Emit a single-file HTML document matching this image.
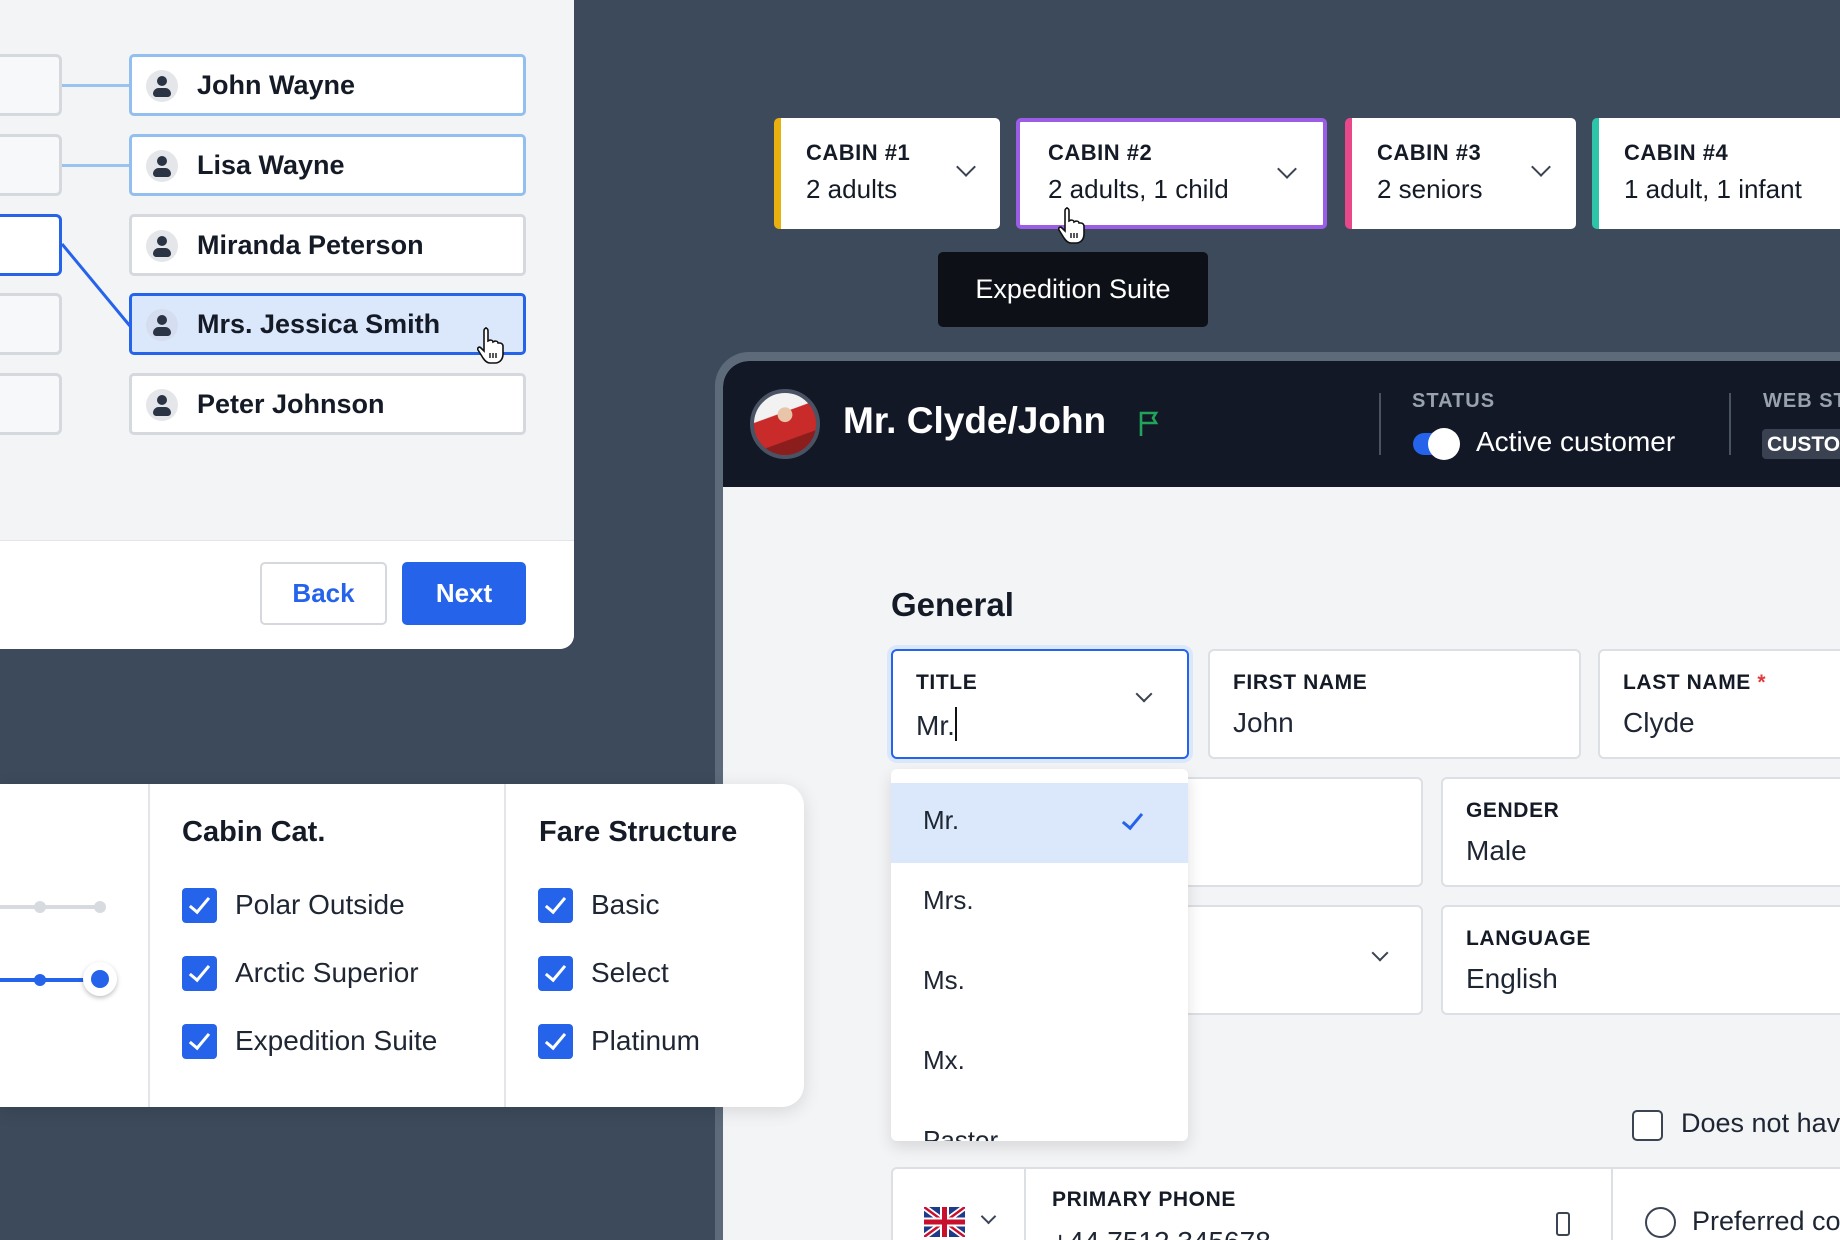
<!DOCTYPE html>
<html style="overflow:hidden;width:1840px;height:1240px"><head><meta charset="utf-8"><style>
*{box-sizing:border-box;margin:0;padding:0}
body{width:1840px;height:1240px;overflow:hidden;background:#3c4a5b;font-family:"Liberation Sans",sans-serif;color:#151b26;position:relative}
.a{position:absolute}
.stub{position:absolute;left:-10px;width:72px;height:62px;border:3px solid #d5d8dd;border-radius:6px;background:#f7f8fa}
.card{position:absolute;left:129px;width:397px;height:62px;border:3px solid #d5d8dd;border-radius:5px;background:#fff;font-size:27px;font-weight:bold;display:flex;align-items:center;padding-left:65px}
.card .av{position:absolute;left:14px;top:13px;width:32px;height:32px;border-radius:50%;background:#e4e6ea}
.card .av:before{content:"";position:absolute;left:11px;top:6px;width:10px;height:10px;border-radius:50%;background:#2b3444}
.card .av:after{content:"";position:absolute;left:7px;top:18px;width:18px;height:9px;border-radius:9px 9px 5px 5px;background:#2b3444}
.cab{position:absolute;top:118px;height:111px;background:#fff;border-radius:5px;padding:22px 0 0 32px;overflow:hidden}
.cab b{display:block;font-size:22px;letter-spacing:.5px}
.cab span{display:block;font-size:26px;margin-top:8px}
.chev{position:absolute;width:14px;height:14px;border-right:2.5px solid #3b4452;border-bottom:2.5px solid #3b4452;transform:rotate(45deg)}
.fld{position:absolute;background:#fff;border:2px solid #dcdfe3;border-radius:6px;padding:20px 0 0 23px}
.fld b{display:block;font-size:21px;letter-spacing:.6px}
.fld span{display:block;font-size:28px;margin-top:12px;color:#1f2633}
.dd div{height:80px;font-size:26px;padding:22px 0 0 32px;color:#1f2633}
.cb{position:absolute;width:35px;height:35px;background:#2563eb;border-radius:4px}
.cb:after{content:"";position:absolute;left:12px;top:5px;width:8px;height:17px;border-right:3.5px solid #fff;border-bottom:3.5px solid #fff;transform:rotate(40deg)}
.lbl{position:absolute;font-size:28px;color:#1f2633}
</style></head><body>

<div class="a" style="left:0;top:0;width:574px;height:649px;background:#f3f4f6;border-radius:0 0 14px 0;overflow:hidden">
  <div class="stub" style="top:54px"></div>
  <div class="stub" style="top:134px"></div>
  <div class="stub" style="top:214px;border-color:#2563eb;background:#fff"></div>
  <div class="stub" style="top:293px"></div>
  <div class="stub" style="top:373px"></div>
  <div class="a" style="left:62px;top:84px;width:67px;height:3px;background:#9cc2ee"></div>
  <div class="a" style="left:62px;top:164px;width:67px;height:3px;background:#9cc2ee"></div>
  <svg class="a" style="left:60px;top:240px" width="72" height="90"><line x1="2" y1="4" x2="70" y2="86" stroke="#2563eb" stroke-width="3"/></svg>
  <div class="card" style="top:54px;border-color:#93bff0"><div class="av"></div>John Wayne</div>
  <div class="card" style="top:134px;border-color:#93bff0"><div class="av"></div>Lisa Wayne</div>
  <div class="card" style="top:214px"><div class="av"></div>Miranda Peterson</div>
  <div class="card" style="top:293px;border-color:#2563eb;background:#dbe8fb"><div class="av" style="background:#d4def0"></div>Mrs. Jessica Smith</div>
  <div class="card" style="top:373px"><div class="av"></div>Peter Johnson</div>
  <div class="a" style="left:0;top:540px;width:574px;height:109px;background:#fff;border-top:1px solid #e3e5e8"></div>
  <div class="a" style="left:260px;top:562px;width:127px;height:63px;border:2px solid #d5d8dd;border-radius:5px;background:#fff;color:#2563eb;font-size:26px;font-weight:bold;text-align:center;line-height:59px">Back</div>
  <div class="a" style="left:402px;top:562px;width:124px;height:63px;border-radius:5px;background:#2563eb;color:#fff;font-size:26px;font-weight:bold;text-align:center;line-height:63px">Next</div>
</div>
<svg class="a" style="left:477px;top:326px" width="30" height="40" viewBox="0 0 30 40"><path d="M8 2c2 0 3 1 3 3v10l2-1c2 0 3 1 3 2l2-1c2 0 3 1 3 2l2 0c2 0 3 2 3 3v8c0 5-3 9-8 9h-5c-3 0-5-2-7-5l-5-8c-1-2 1-4 3-2l3 3V5c0-2 1-3 3-3z" fill="#fff" stroke="#111" stroke-width="1.6"/><path d="M13 27v5M16 27v5M19 27v5" stroke="#111" stroke-width="1.4"/></svg>

<div class="cab" style="left:774px;width:226px;border-left:7px solid #e8b10f;padding-left:25px"><b>CABIN #1</b><span>2 adults</span><div class="chev" style="left:178px;top:42px"></div></div>
<div class="cab" style="left:1016px;width:311px;border:4px solid #9b5de5;padding:18px 0 0 28px"><b>CABIN #2</b><span>2 adults, 1 child</span><div class="chev" style="left:260px;top:40px"></div></div>
<div class="cab" style="left:1345px;width:231px;border-left:7px solid #e8488a;padding-left:25px"><b>CABIN #3</b><span>2 seniors</span><div class="chev" style="left:182px;top:42px"></div></div>
<div class="cab" style="left:1592px;width:248px;border-left:7px solid #2ec4a9;padding-left:25px;border-radius:5px 0 0 5px"><b>CABIN #4</b><span style="white-space:nowrap">1 adult, 1 infant</span></div>
<svg class="a" style="left:1058px;top:206px" width="30" height="40" viewBox="0 0 30 40"><path d="M8 2c2 0 3 1 3 3v10l2-1c2 0 3 1 3 2l2-1c2 0 3 1 3 2l2 0c2 0 3 2 3 3v8c0 5-3 9-8 9h-5c-3 0-5-2-7-5l-5-8c-1-2 1-4 3-2l3 3V5c0-2 1-3 3-3z" fill="#fff" stroke="#111" stroke-width="1.6"/><path d="M13 27v5M16 27v5M19 27v5" stroke="#111" stroke-width="1.4"/></svg>
<div class="a" style="left:938px;top:252px;width:270px;height:75px;background:#0d1117;border-radius:5px;color:#fff;font-size:27px;text-align:center;line-height:75px">Expedition Suite</div>

<div class="a" style="left:715px;top:352px;width:1125px;height:888px;background:#5d6a79;border-radius:34px 0 0 0"></div>
<div class="a" style="left:723px;top:361px;width:1117px;height:879px;background:#f3f4f6;border-radius:26px 0 0 0;overflow:hidden">
  <div class="a" style="left:0;top:0;width:1117px;height:126px;background:#131827"></div>
</div>
<div class="a" style="left:750px;top:389px;width:70px;height:70px;border-radius:50%;background:radial-gradient(circle at 50% 35%,#e8c4a8 0 14%,transparent 15%),linear-gradient(160deg,#f2f2f2 0 35%,#c92a2a 36% 70%,#8c1d1d 71%);border:4px solid #4a5363"></div>
<div class="a" style="left:843px;top:400px;font-size:37px;font-weight:bold;color:#fff">Mr. Clyde/John</div>
<svg class="a" style="left:1138px;top:410px" width="22" height="28"><path d="M3 26V3h15l-3 5 3 5H3" fill="none" stroke="#22a35a" stroke-width="2.6"/></svg>
<div class="a" style="left:1379px;top:393px;width:2px;height:62px;background:#4a5261"></div>
<div class="a" style="left:1412px;top:390px;font-size:20px;font-weight:bold;color:#98a1ae;letter-spacing:1px">STATUS</div>
<div class="a" style="left:1413px;top:433px;width:46px;height:22px;border-radius:11px;background:#2563eb"></div>
<div class="a" style="left:1428px;top:428px;width:32px;height:32px;border-radius:50%;background:#fff"></div>
<div class="a" style="left:1476px;top:426px;font-size:28px;color:#fff">Active customer</div>
<div class="a" style="left:1729px;top:393px;width:2px;height:62px;background:#4a5261"></div>
<div class="a" style="left:1763px;top:390px;font-size:20px;font-weight:bold;color:#98a1ae;letter-spacing:1px;white-space:nowrap">WEB STATUS</div>
<div class="a" style="left:1762px;top:429px;width:78px;height:30px;background:#3a4150;border-radius:4px 0 0 4px;color:#fff;font-size:21px;font-weight:bold;padding:4px 0 0 5px;overflow:hidden;white-space:nowrap">CUSTOMER</div>

<div class="a" style="left:891px;top:586px;font-size:33px;font-weight:bold">General</div>
<div class="fld" style="left:891px;top:649px;width:298px;height:110px;border-color:#2563eb;box-shadow:0 0 0 4px #dbe8fb"><b>TITLE</b><span>Mr.<span style="display:inline-block;width:2px;height:34px;background:#111;vertical-align:-6px;margin:0"></span></span><div class="chev" style="left:245px;top:37px;width:12px;height:12px;border-width:2px"></div></div>
<div class="fld" style="left:1208px;top:649px;width:373px;height:110px"><b>FIRST NAME</b><span>John</span></div>
<div class="fld" style="left:1598px;top:649px;width:260px;height:110px"><b>LAST NAME <i style="color:#e23b3b;font-style:normal">*</i></b><span>Clyde</span></div>
<div class="fld" style="left:1150px;top:777px;width:273px;height:110px"></div>
<div class="fld" style="left:1441px;top:777px;width:420px;height:110px"><b>GENDER</b><span>Male</span></div>
<div class="fld" style="left:1150px;top:905px;width:273px;height:110px"><div class="chev" style="left:222px;top:40px;width:12px;height:12px;border-width:2px"></div></div>
<div class="fld" style="left:1441px;top:905px;width:420px;height:110px"><b>LANGUAGE</b><span>English</span></div>

<div class="a dd" style="left:891px;top:769px;width:297px;height:372px;background:#fff;border-radius:6px;overflow:hidden;box-shadow:0 6px 16px rgba(0,0,0,.12)">
  <div style="height:14px;padding:0"></div>
  <div style="background:#dbe8fb;position:relative">Mr.<span style="position:absolute;left:236px;top:26px;width:11px;height:20px;border-right:3px solid #2563eb;border-bottom:3px solid #2563eb;transform:rotate(40deg)"></span></div>
  <div>Mrs.</div><div>Ms.</div><div>Mx.</div><div>Pastor</div>
</div>

<div class="a" style="left:1632px;top:1110px;width:31px;height:31px;border:2.5px solid #3b4452;border-radius:5px;background:#fff"></div>
<div class="a" style="left:1681px;top:1108px;font-size:27px;color:#1f2633;white-space:nowrap">Does not have</div>

<div class="a" style="left:891px;top:1167px;width:949px;height:73px;background:#fff;border:2px solid #dcdfe3;border-bottom:none;border-right:none;border-radius:6px 0 0 0;overflow:hidden">
  <div class="a" style="left:131px;top:0;width:2px;height:80px;background:#dcdfe3"></div>
  <div class="a" style="left:718px;top:0;width:2px;height:80px;background:#dcdfe3"></div>
  <svg class="a" style="left:31px;top:38px" width="41" height="30"><rect width="41" height="30" fill="#1e3a8a"/><path d="M0 0L41 30M41 0L0 30" stroke="#fff" stroke-width="6"/><path d="M0 0L41 30M41 0L0 30" stroke="#c8102e" stroke-width="2.5"/><path d="M20.5 0v30M0 15h41" stroke="#fff" stroke-width="9"/><path d="M20.5 0v30M0 15h41" stroke="#c8102e" stroke-width="5"/></svg>
  <div class="chev" style="left:90px;top:42px;width:11px;height:11px;border-width:2px"></div>
  <div class="a" style="left:159px;top:19px;font-size:21px;font-weight:bold;letter-spacing:.6px;white-space:nowrap">PRIMARY PHONE</div>
  <div class="a" style="left:159px;top:57px;font-size:28px;color:#1f2633;white-space:nowrap">+44 7512 345678</div>
  <div class="a" style="left:663px;top:43px;width:14px;height:24px;border:2px solid #3b4452;border-radius:3px"></div>
  <div class="a" style="left:752px;top:38px;width:31px;height:31px;border:2.5px solid #3b4452;border-radius:50%"></div>
  <div class="a" style="left:799px;top:37px;font-size:27px;color:#1f2633;white-space:nowrap">Preferred contact</div>
</div>

<div class="a" style="left:0;top:784px;width:804px;height:323px;background:#fff;border-radius:0 22px 22px 0;box-shadow:0 4px 18px rgba(0,0,0,.12)">
  <div class="a" style="left:148px;top:0;width:2px;height:323px;background:#e3e5e8"></div>
  <div class="a" style="left:504px;top:0;width:2px;height:323px;background:#e3e5e8"></div>
  <div class="a" style="left:0;top:121px;width:100px;height:4px;background:#d7dadf"></div>
  <div class="a" style="left:34px;top:117px;width:12px;height:12px;border-radius:50%;background:#d7dadf"></div>
  <div class="a" style="left:94px;top:117px;width:12px;height:12px;border-radius:50%;background:#d7dadf"></div>
  <div class="a" style="left:0;top:194px;width:100px;height:4px;background:#2563eb"></div>
  <div class="a" style="left:34px;top:190px;width:12px;height:12px;border-radius:50%;background:#2563eb"></div>
  <div class="a" style="left:83px;top:178px;width:34px;height:34px;border-radius:50%;background:#fff;box-shadow:0 2px 5px rgba(0,0,0,.25)"></div>
  <div class="a" style="left:91px;top:186px;width:18px;height:18px;border-radius:50%;background:#2563eb"></div>
  <div class="a" style="left:182px;top:32px;font-size:29px;font-weight:bold">Cabin Cat.</div>
  <div class="a" style="left:539px;top:32px;font-size:29px;font-weight:bold">Fare Structure</div>
  <div class="cb" style="left:182px;top:104px"></div><div class="lbl" style="left:235px;top:105px">Polar Outside</div>
  <div class="cb" style="left:182px;top:172px"></div><div class="lbl" style="left:235px;top:173px">Arctic Superior</div>
  <div class="cb" style="left:182px;top:240px"></div><div class="lbl" style="left:235px;top:241px">Expedition Suite</div>
  <div class="cb" style="left:538px;top:104px"></div><div class="lbl" style="left:591px;top:105px">Basic</div>
  <div class="cb" style="left:538px;top:172px"></div><div class="lbl" style="left:591px;top:173px">Select</div>
  <div class="cb" style="left:538px;top:240px"></div><div class="lbl" style="left:591px;top:241px">Platinum</div>
</div>
</body></html>
